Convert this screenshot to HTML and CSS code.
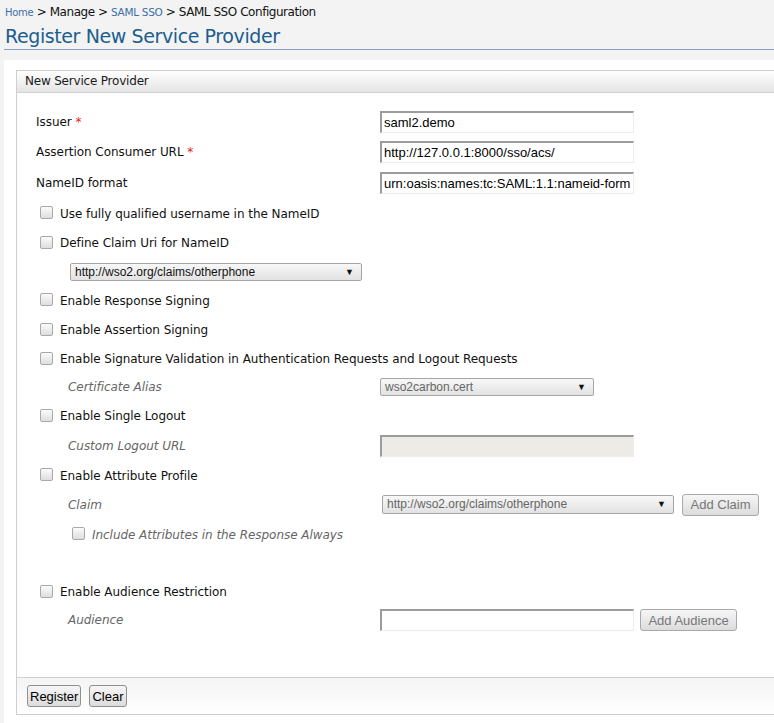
FILE: index.html
```html
<!DOCTYPE html>
<html>
<head>
<meta charset="utf-8">
<link rel="stylesheet" href="styles.css">
</head>
<body>
<div class="page">
  <div class="crumbs"><a class="crumb-link home">Home</a> &gt; Manage &gt; <a class="crumb-link">SAML SSO</a> &gt; SAML SSO Configuration</div>
  <h1 class="title">Register New Service Provider</h1>
  <div class="workarea">
    <div class="panel">
      <div class="panel-head">New Service Provider</div>
      <div class="panel-body">
        <div class="row h30"><span class="label">Issuer <span class="req">*</span></span><input class="text" value="saml2.demo"></div>
        <div class="row h30"><span class="label">Assertion Consumer URL <span class="req">*</span></span><input class="text" value="http://127.0.0.1:8000/sso/acs/"></div>
        <div class="row h31"><span class="label">NameID format</span><input class="text" value="urn:oasis:names:tc:SAML:1.1:nameid-format:emailAddress"></div>
        <div class="row h31 chk"><span class="cb"></span><span>Use fully qualified username in the NameID</span></div>
        <div class="row h28 chk"><span class="cb"></span><span>Define Claim Uri for NameID</span></div>
        <div class="row h29 sel-row"><div class="select wide">http://wso2.org/claims/otherphone<span class="arrow">▼</span></div></div>
        <div class="row h29 chk"><span class="cb"></span><span>Enable Response Signing</span></div>
        <div class="row h30 chk"><span class="cb"></span><span>Enable Assertion Signing</span></div>
        <div class="row h28 chk"><span class="cb"></span><span>Enable Signature Validation in Authentication Requests and Logout Requests</span></div>
        <div class="row h28"><span class="label sub">Certificate Alias</span><div class="select cert">wso2carbon.cert<span class="arrow">▼</span></div></div>
        <div class="row h30 chk"><span class="cb"></span><span>Enable Single Logout</span></div>
        <div class="row h29"><span class="label sub">Custom Logout URL</span><input class="text disabled" disabled></div>
        <div class="row h31 chk"><span class="cb"></span><span>Enable Attribute Profile</span></div>
        <div class="row h27"><span class="label sub">Claim</span><div class="select claim">http://wso2.org/claims/otherphone<span class="arrow">▼</span></div><button class="btn dim add-claim">Add Claim</button></div>
        <div class="row h33 chk inner"><span class="cb"></span><span class="sub-text">Include Attributes in the Response Always</span></div>
        <div class="spacer"></div>
        <div class="row h28 chk"><span class="cb"></span><span>Enable Audience Restriction</span></div>
        <div class="row h28"><span class="label sub">Audience</span><input class="text" value=""><button class="btn dim add-aud">Add Audience</button></div>
      </div>
      <div class="panel-foot">
        <button class="btn">Register</button>
        <button class="btn">Clear</button>
      </div>
    </div>
  </div>
</div>
</body>
</html>
```
FILE: styles.css
```css
html, body {
  margin: 0;
  padding: 0;
  overflow: hidden;
  background: #f3f3f3;
}
body {
  font-family: "DejaVu Sans", Verdana, sans-serif;
  font-size: 12px;
  color: #111;
}
.page {
  width: 810px;
}
.crumbs {
  padding: 4px 0 0 5px;
  height: 21px;
  box-sizing: border-box;
  font-size: 12px;
  letter-spacing: -0.45px;
  line-height: 16px;
  height: 25px;
}
.crumb-link {
  color: #3b6fa8;
  font-size: 10.5px;
  letter-spacing: -0.3px;
  text-decoration: none;
}
.crumb-link.home {
  font-size: 10px;
}
.title {
  margin: 0 0 0 4px;
  padding: 0 0 0 1px;
  height: 24px;
  font-size: 19px;
  font-weight: normal;
  letter-spacing: -0.4px;
  line-height: 22px;
  color: #1c5d8f;
  border-bottom: 1px solid #8b9fc3;
}
.workarea {
  margin: 10px 0 0 4px;
  padding: 10px 0 9px 12px;
  background: #fff;
  min-height: 700px;
}
.panel {
  border: 1px solid #cfcfcf;
  background: #fff;
}
.panel-head {
  height: 21px;
  line-height: 21px;
  padding-left: 8px;
  font-size: 12px;
  letter-spacing: -0.2px;
  color: #1a1a1a;
  background: linear-gradient(#ffffff, #e4e4e4);
  border-bottom: 1px solid #d2d2d2;
}
.panel-body {
  padding: 14px 0 43px 19px;
}
.row {
  display: flex;
  align-items: center;
}
.h27 { height: 27px; }
.h28 { height: 28px; }
.h29 { height: 29px; }
.h30 { height: 30px; }
.h31 { height: 31px; }
.h33 { height: 33px; }
.spacer { height: 27px; }
.label {
  width: 344px;
  flex: none;
  letter-spacing: -0.05px;
}
.label.sub {
  padding-left: 32px;
  width: 312px;
  font-style: italic;
  color: #666;
}
.req {
  color: #e02020;
}
.chk {
  padding-left: 4px;
  letter-spacing: -0.05px;
}
.chk.inner {
  padding-left: 36px;
}
.sub-text {
  font-style: italic;
  color: #666;
}
.cb {
  width: 11px;
  height: 11px;
  border: 1px solid #a9a9a9;
  border-radius: 2px;
  background: linear-gradient(#fbfbfb, #dedede);
  margin-right: 7px;
  flex: none;
  position: relative;
  top: -1px;
}
.text {
  box-sizing: border-box;
  width: 254px;
  height: 22px;
  margin: 0;
  padding: 0 2px;
  border-style: solid;
  border-width: 2px 1px 1px 2px;
  border-color: #9c9c9c #ececec #ececec #9c9c9c;
  font-family: "Liberation Sans", Arial, sans-serif;
  font-size: 13px;
  color: #000;
  background: #fff;
  outline: none;
}
.text.disabled {
  background: #ecebe6;
}
.select {
  box-sizing: border-box;
  height: 18px;
  border: 1px solid #a6a6a6;
  border-radius: 2px;
  background: linear-gradient(#f8f8f8, #e2e2e2);
  font-family: "Liberation Sans", Arial, sans-serif;
  font-size: 12px;
  line-height: 16px;
  padding-left: 4px;
  color: #111;
  position: relative;
}
.arrow {
  position: absolute;
  right: 7px;
  top: 0;
  font-size: 9px;
  color: #111;
}
.sel-row {
  padding-left: 34px;
}
.select.wide {
  width: 292px;
}
.select.cert {
  width: 214px;
  color: #666;
}
.select.claim {
  width: 292px;
  margin-left: 2px;
  height: 19px;
  line-height: 17px;
  color: #666;
}
.btn {
  box-sizing: border-box;
  height: 22px;
  padding: 0 2px;
  border: 1px solid #8f8f8f;
  border-radius: 3px;
  background: linear-gradient(#f6f6f6, #dcdcdc);
  font-family: "Liberation Sans", Arial, sans-serif;
  font-size: 13px;
  color: #000;
}
.btn.dim {
  color: #777;
  border-color: #a9a9a9;
}
.add-claim {
  margin-left: 8px;
  width: 77px;
}
.add-aud {
  margin-left: 6px;
  width: 97px;
}
.panel-foot {
  height: 36px;
  border-top: 1px solid #cfcfcf;
  background: linear-gradient(#f4f4f4, #ffffff);
  display: flex;
  align-items: center;
  padding: 0 0 0 10px;
  gap: 8px;
}
```
